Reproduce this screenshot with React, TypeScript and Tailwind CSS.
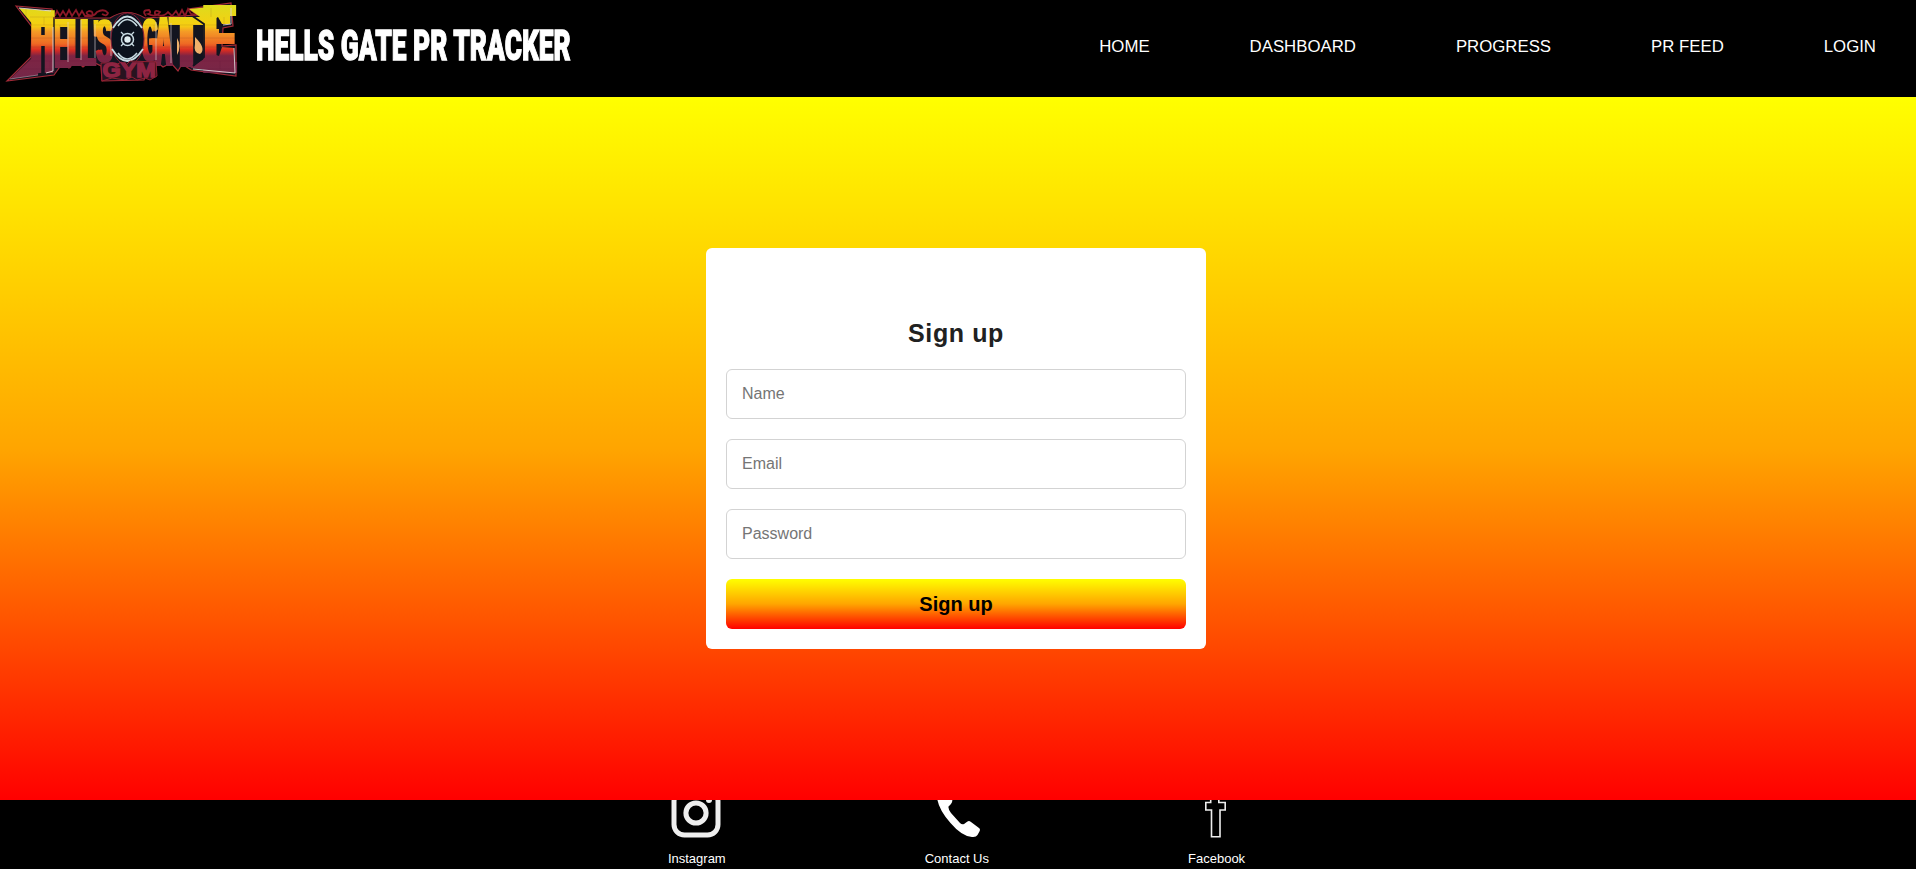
import React from "react";

type Letter = { ch: string; adv: number; x: number; base: number; w: number; h: number; bold: number };

const logoLetters: Letter[] = [
  { ch: "H", adv: 7.22, x: 32, base: 73, w: 22, h: 62, bold: 0.9 },
  { ch: "E", adv: 6.67, x: 53, base: 68, w: 17, h: 49, bold: 0.7 },
  { ch: "L", adv: 6.11, x: 68, base: 66, w: 15, h: 47, bold: 0.9 },
  { ch: "L", adv: 6.11, x: 81, base: 66, w: 14, h: 47, bold: 0.9 },
  { ch: "'", adv: 2.38, x: 92.5, base: 65, w: 7, h: 45, bold: 0.2 },
  { ch: "S", adv: 6.67, x: 96.5, base: 62, w: 16, h: 42, bold: 0.6 },
  { ch: "G", adv: 7.78, x: 142, base: 61, w: 16, h: 42, bold: 0.7 },
  { ch: "A", adv: 7.22, x: 155, base: 66, w: 17, h: 48, bold: 0.7 },
  { ch: "T", adv: 6.11, x: 171, base: 67, w: 31, h: 50, bold: 0.6 },
  { ch: "E", adv: 6.67, x: 203, base: 73, w: 33, h: 67, bold: 0.6 },
];

const fitText = (l: Letter) =>
  `translate(${l.x} ${l.base}) scale(${l.w / l.adv} ${l.h / 6.88})`;

function Logo() {
  return (
    <svg
      width="240"
      height="90"
      viewBox="0 0 240 90"
      className="block shrink-0 font-['Liberation_Sans',Arial,sans-serif] font-bold"
      aria-hidden="true"
    >
      <defs>
        <linearGradient id="fire" gradientUnits="userSpaceOnUse" x1="0" y1="4" x2="0" y2="76">
          <stop offset="0" stopColor="#dcdc1e" />
          <stop offset="0.3" stopColor="#f6cf10" />
          <stop offset="0.38" stopColor="#f49c26" />
          <stop offset="0.55" stopColor="#ee6a24" />
          <stop offset="0.64" stopColor="#d92c22" />
          <stop offset="0.72" stopColor="#7e2443" />
          <stop offset="1" stopColor="#762748" />
        </linearGradient>
        <mask id="letters" maskUnits="userSpaceOnUse" x="0" y="0" width="240" height="90">
          <g fill="#fff" fontSize="10">
            {logoLetters.map((l, i) => (
              <g key={i} transform={fitText(l)}>
                <text x={-l.bold}>{l.ch}</text>
                <text>{l.ch}</text>
                <text x={l.bold}>{l.ch}</text>
              </g>
            ))}
          </g>
          <path d="M19 8 51 11V18H46V27H41V45L38 75 10 79 33 57 34 26Z" fill="#fff" />
          <path d="M189 9 230 5V24H222L218 17 213 20V29H219V42H213V54L219 56 222 47 234 48 235 73 190 68 207 57V22Z" fill="#fff" />
          <path d="M188 13 204 24V57L193 66" fill="none" stroke="#000" strokeWidth="1.8" />
          <path d="M54 17V76" fill="none" stroke="#000" strokeWidth="1.4" />
        </mask>
      </defs>
      <path
        d="M16 6 52 9 54 18 110 18Q127 7 145 18L197 15 189 9 231 3 233 26 223 28 222 46 236 45 236 76 191 70 182 64 178 71 171 63 163 67 157 62 150 62 144 80 102 81 101 66 91 61 83 67 76 61 69 68 62 64 54 75 7 81 31 57 32 27Z"
        fill="#13141f"
        stroke="#a52a38"
        strokeWidth="1.2"
      />
      <g fill="none" stroke="#8b1828" strokeWidth="1.8">
        <path d="M55 16 57 11 60 16 63 11 66 16 69 10 72 16 76 10 79 16 82 11 85 16H92Q94 11 89 11 84 13 89 15T97 12Q104 8 108 13 107 17 102 14" />
        <path d="M146 16Q141 10 149 10 152 13 148 14 156 18 160 12 154 9 155 14 163 18 168 12L172 16 176 11 179 16 182 10 185 16 188 9 191 14 196 15" />
      </g>
      <g mask="url(#letters)">
        <rect width="240" height="90" fill="url(#fire)" />
        <path
          d="M30 17H58M18 25H240M31 38H240M30 47H240M20 61H240M14 69H240M26 8V17M44 17V25M60 25V38M75 38V47M90 25V38M154 25V38M178 38V47M211 8V17M224 17V25M220 61V69M50 61V69"
          fill="none"
          stroke="#5d1830"
          strokeOpacity="0.2"
          strokeWidth="0.6"
        />
      </g>
      <g fill="none" stroke="#dad2d6" strokeWidth="0.9">
        <path d="M19 8 51 11M53 27V71L46 73M231 8V24L223 25M234 48 235 73 193 69" />
        <path d="M68 22V62M81 20V60M95 24V58M111 22V56M156 22V60M171 23V63" strokeOpacity="0.7" />
        <path d="M38 75 10 79" strokeOpacity="0.5" />
      </g>
      <path d="M177 38Q182 46 177 55Z M195 37Q207 49 200 54 193 53 195 44Z" fill="#efb06b" />
      <ellipse cx="127.5" cy="39" rx="16.5" ry="26" fill="#0b111c" stroke="#871e34" strokeWidth="1" />
      <g fill="none" stroke="#c8dbe2">
        <path d="M113 28Q127 5 142 28M112 49Q127 73 143 49" strokeWidth="1.8" />
        <path d="M118 26Q127 13 137 26M118 53Q127 65 137 53" strokeWidth="1.5" />
        <circle cx="127.5" cy="39.5" r="6" strokeWidth="1.5" />
        <path d="M121 32 124 35M134 32 131 35M121 46 124 43M134 46 131 43" strokeWidth="1.3" />
      </g>
      <circle cx="127.5" cy="39.5" r="3.2" fill="#dfecef" />
      <path d="M101 63H113L116 65 121 62 126 65 130 61 156 62 157 76 150 80 145 78 137 80 132 77 125 80 112 78 102 81Z" fill="#28131f" stroke="#9f2035" strokeWidth="0.9" />
      <text
        transform="translate(102.5 76.8) scale(2.34 1.98)"
        fontSize="10"
        fill="#8e2442"
        stroke="#8e2442"
        strokeWidth="0.7"
      >
        GYM
      </text>
    </svg>
  );
}

const navItems = ["HOME", "DASHBOARD", "PROGRESS", "PR FEED", "LOGIN"];

function InstagramIcon() {
  return (
    <svg width="50" height="50" viewBox="0 0 50 50" fill="none" stroke="#eeeeee" className="block">
      <rect x="3" y="3" width="44" height="44" rx="10.5" strokeWidth="5" />
      <circle cx="25" cy="25" r="10.1" strokeWidth="5" />
      <circle cx="38" cy="12" r="3" fill="#eeeeee" stroke="none" />
    </svg>
  );
}

function PhoneIcon() {
  return (
    <svg width="50" height="50" viewBox="0 0 50 50" fill="#fff" className="block">
      <path d="M6 3 12 .5Q14 0 15 2L21 11Q22 13 20 16L17.5 18.5Q17 21 20 25L29 35Q31 37 33 36L36.5 33.5Q38 32.5 40 34L48 40Q49.5 41 48.7 43L46.5 47Q45 49.5 41 49 31 48.5 19.5 35 7 21 6 9Z" />
    </svg>
  );
}

function FacebookIcon() {
  return (
    <svg width="50" height="50" viewBox="0 0 50 50" fill="none" stroke="#eeeeee" strokeWidth="1.6" className="block">
      <path d="M20.5 48.8V22H14.8V14.5H19.7V10Q19.5 2 27.5 2H34V9.5H29.5Q27.8 9.5 27.8 12V14.5H34.2V22H29V48.8Z" />
    </svg>
  );
}

const footerItems = [
  { label: "Instagram", icon: <InstagramIcon /> },
  { label: "Contact Us", icon: <PhoneIcon /> },
  { label: "Facebook", icon: <FacebookIcon /> },
];

export default function App() {
  return (
    <div className="flex h-[869px] w-full flex-col overflow-hidden bg-black font-['Liberation_Sans',Arial,sans-serif]">
      <header className="flex h-[97px] shrink-0 justify-between bg-black text-white">
        <div className="flex items-start">
          <Logo />
          <h1 className="ml-4 mt-4 h-[60px] w-[330px] origin-left scale-x-[0.627] whitespace-nowrap font-[Roboto,sans-serif] text-[42px] font-black leading-[60px] [-webkit-text-stroke:1.3px_white]">
            HELLS GATE PR TRACKER
          </h1>
        </div>
        <nav className="flex h-[94px] items-center gap-[100px] pr-10 text-[16.8px]">
          {navItems.map((item) => (
            <a key={item} href="#">
              {item}
            </a>
          ))}
        </nav>
      </header>

      <main className="flex h-[703px] shrink-0 items-center justify-center bg-[linear-gradient(yellow,orange,red)] pr-1">
        <form className="flex h-[401px] w-[500px] flex-col gap-5 rounded-[6px] bg-white px-5 pb-5">
          <h2 className="-mb-5 h-[121px] pt-[68px] text-center text-[25px] font-bold leading-[34px] tracking-[0.6px] text-[#212121]">
            Sign up
          </h2>
          {["Name", "Email", "Password"].map((label) => (
            <input
              key={label}
              type={label === "Password" ? "password" : "text"}
              placeholder={label}
              className="h-[50px] w-full shrink-0 rounded-[6px] border border-[#d3d3d3] px-[15px] text-base placeholder:text-[#757575]"
            />
          ))}
          <button
            type="button"
            className="h-[50px] w-full shrink-0 rounded-[6px] bg-[linear-gradient(yellow,orange,red)] text-[20px] font-bold text-black"
          >
            Sign up
          </button>
        </form>
      </main>

      <footer className="flex h-[69px] shrink-0 items-start justify-center gap-[199px] overflow-hidden bg-black pr-[3px] text-[13px] text-white">
        {footerItems.map(({ label, icon }) => (
          <a key={label} href="#" className="-mt-3 flex flex-col items-center">
            <span className="pr-0.5">{icon}</span>
            <span className="mt-[13px] leading-4">{label}</span>
          </a>
        ))}
      </footer>
    </div>
  );
}
